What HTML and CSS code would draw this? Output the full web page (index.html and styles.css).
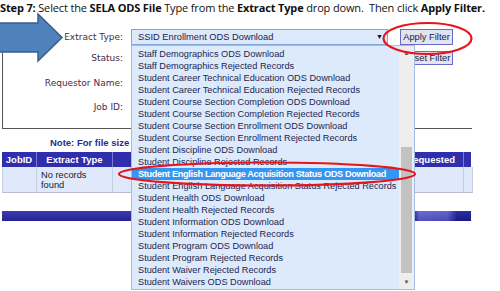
FILE: index.html
```
<!DOCTYPE html>
<html>
<head>
<meta charset="utf-8">
<link rel="stylesheet" href="styles.css">
</head>
<body>
<div class="page">
  <div class="title"><b>Step 7:</b> Select the <b>SELA ODS File</b> Type from the <b>Extract Type</b> drop down.&nbsp; Then click <b>Apply Filter.</b></div>

  <div class="panel">
    <div class="form">
      <div class="lbl">Extract Type:</div>
      <div class="select"><span>SSID Enrollment ODS Download</span><span class="caret">&#9660;</span></div>
      <div class="btn">Apply Filter</div>

      <div class="lbl">Status:</div>
      <div class="ctl"></div>
      <div class="btn btn-reset">Reset Filter</div>

      <div class="lbl">Requestor Name:</div>
      <div class="ctl"></div>
      <div></div>

      <div class="lbl">Job ID:</div>
      <div class="ctl"></div>
      <div></div>
    </div>
  </div>

  <div class="note">Note: For file size</div>

  <div class="table">
    <div class="th c1">JobID</div>
    <div class="th c2">Extract Type</div>
    <div class="th c3">File</div>
    <div class="th c4">Requested</div>
    <div class="th c5"></div>
    <div class="td c1"></div>
    <div class="td c2">No records found</div>
    <div class="td c3"></div>
    <div class="td c4"></div>
    <div class="td c5"></div>
  </div>

  <div class="bar"></div>

  <div class="list">
    <div class="items">
      <div class="item">Staff Demographics ODS Download</div>
      <div class="item">Staff Demographics Rejected Records</div>
      <div class="item">Student Career Technical Education ODS Download</div>
      <div class="item">Student Career Technical Education Rejected Records</div>
      <div class="item">Student Course Section Completion ODS Download</div>
      <div class="item">Student Course Section Completion Rejected Records</div>
      <div class="item">Student Course Section Enrollment ODS Download</div>
      <div class="item">Student Course Section Enrollment Rejected Records</div>
      <div class="item">Student Discipline ODS Download</div>
      <div class="item">Student Discipline Rejected Records</div>
      <div class="item selected">Student English Language Acquisition Status ODS Download</div>
      <div class="item">Student English Language Acquisition Status Rejected Records</div>
      <div class="item">Student Health ODS Download</div>
      <div class="item">Student Health Rejected Records</div>
      <div class="item">Student Information ODS Download</div>
      <div class="item">Student Information Rejected Records</div>
      <div class="item">Student Program ODS Download</div>
      <div class="item">Student Program Rejected Records</div>
      <div class="item">Student Waiver Rejected Records</div>
      <div class="item">Student Waivers ODS Download</div>
    </div>
    <div class="scroll">
      <div class="sarrow">&#9650;</div>
      <div class="strack"><div class="thumb"></div></div>
      <div class="sarrow">&#9660;</div>
    </div>
  </div>

  <svg class="arrow" width="66" height="52" viewBox="0 12 66 52">
    <path d="M-2 23 H38 V14 L62 37.5 L38 61 V52 H-2 Z" fill="#4f81bd" stroke="#385d8a" stroke-width="1.5"/>
  </svg>

  <svg class="marks" width="500" height="291" viewBox="0 0 500 291">
    <ellipse cx="427.5" cy="38.5" rx="44" ry="15.5" fill="none" stroke="#e8141c" stroke-width="2.2"/>
    <ellipse cx="267" cy="174" rx="148" ry="11.5" fill="none" stroke="#e8141c" stroke-width="2.2"/>
  </svg>
</div>
</body>
</html>
```

FILE: styles.css
```
html, body {
  margin: 0;
  padding: 0;
  background: #ffffff;
}
.page {
  position: relative;
  width: 500px;
  height: 291px;
  overflow: hidden;
  font-family: "Liberation Sans", Arial, sans-serif;
}
.title {
  height: 23px;
  font-family: "Open Sans", "Liberation Sans", sans-serif;
  font-size: 11px;
  line-height: 15px;
  color: #111;
  white-space: nowrap;
  letter-spacing: -0.15px;
}
.title b {
  font-weight: 700;
}
.panel {
  margin-left: 2px;
  width: 469px;
  border-left: 1px solid #555;
  border-bottom: 1px solid #555;
  padding-top: 5px;
  padding-bottom: 9px;
}
.form {
  display: grid;
  grid-template-columns: 122px 257px 65px;
  grid-template-rows: 17px 26px 24px 24px;
  column-gap: 6px;
  align-items: center;
}
.form > .btn {
  margin-left: 6px;
  width: 53px;
}
.lbl {
  font-family: "DejaVu Sans", Verdana, sans-serif;
  font-size: 9px;
  color: #4a2a48;
  text-align: right;
  padding-right: 2px;
}
.select {
  height: 16px;
  box-sizing: border-box;
  border: 1px solid #7fa3de;
  background: #dce9fb;
  display: flex;
  align-items: center;
  justify-content: space-between;
  padding: 0 4px 0 6px;
  font-size: 9.3px;
  color: #1c1c4c;
}
.caret {
  font-size: 7px;
  color: #111;
}
.ctl {
  height: 15px;
}
.btn {
  height: 16px;
  box-sizing: border-box;
  border: 1px solid #6a6ac8;
  background: #e2e5f0;
  font-size: 9.3px;
  color: #1a1a3a;
  display: flex;
  align-items: center;
  justify-content: center;
  white-space: nowrap;
}
.btn-reset {
  height: 14px;
}
.note {
  margin-top: 8px;
  padding-left: 50px;
  font-size: 9.5px;
  font-weight: 700;
  color: #2c2c88;
  line-height: 12px;
}
.table {
  margin-top: 3px;
  margin-left: 2px;
  width: 469px;
  display: grid;
  grid-template-columns: 35px 76px 100px 251px 7px;
  grid-template-rows: 15px 26px;
}
.th {
  background: #2f2fae;
  color: #fff;
  font-weight: 700;
  font-size: 9.5px;
  line-height: 15px;
  text-align: center;
  border-right: 1px solid #7a7ad2;
  white-space: nowrap;
  overflow: hidden;
}
.th.c4 {
  text-align: right;
  padding-right: 8px;
}
.th.c5 {
  border-right: none;
}
.td {
  background: #dfe9fb;
  border-right: 1px solid #c6cfe0;
  border-bottom: 1px solid #b8bccc;
  font-size: 9.3px;
  line-height: 10px;
  color: #222;
  padding: 3px 4px;
}
.td.c1 {
  border-left: 1px solid #c6cfe0;
}
.bar {
  margin-top: 18px;
  margin-left: 2px;
  width: 469px;
  height: 10px;
  background:
    linear-gradient(to bottom, rgba(255,255,255,0.08), rgba(0,0,40,0.15)),
    linear-gradient(to right, #2a2aa6 0%, #2a2aa6 88%, #6060d4 89%, #5656cc 95%, #1c1c98 97%, #1c1c98 100%);
}
.list {
  position: absolute;
  left: 131px;
  top: 45px;
  width: 284px;
  height: 245px;
  box-sizing: border-box;
  border: 1px solid #a4bde6;
  background: #ddeafb;
  display: flex;
}
.items {
  flex: 1;
  padding-top: 2px;
}
.item {
  height: 12px;
  line-height: 12px;
  padding-left: 6px;
  font-size: 9.2px;
  color: #1e1e50;
  white-space: nowrap;
  overflow: hidden;
}
.item.selected {
  background: #3396f4;
  color: #fff;
  font-weight: 700;
  letter-spacing: -0.35px;
}
.scroll {
  width: 15px;
  background: #eeeeee;
  display: flex;
  flex-direction: column;
}
.sarrow {
  height: 14px;
  font-size: 6px;
  color: #555;
  text-align: center;
  line-height: 14px;
}
.strack {
  flex: 1;
  padding-top: 87px;
  padding-bottom: 2px;
  display: flex;
  flex-direction: column;
}
.thumb {
  height: 126px;
  margin: 0 2px;
  background: #c2c2c2;
}
.arrow {
  position: absolute;
  left: 0;
  top: 12px;
}
.marks {
  position: absolute;
  left: 0;
  top: 0;
  pointer-events: none;
}
```
